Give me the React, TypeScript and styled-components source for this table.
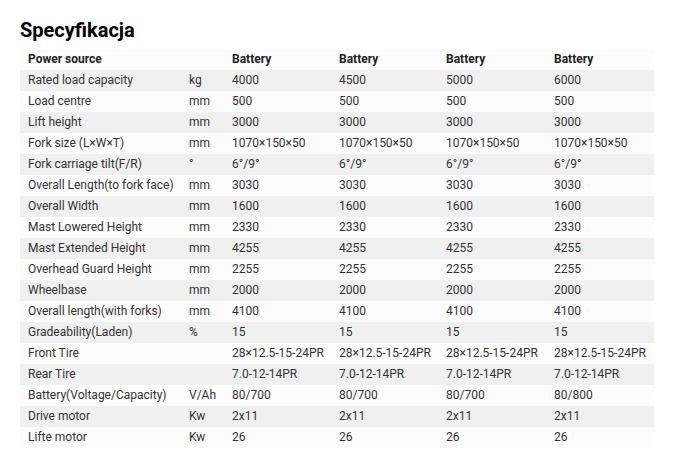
import React from "react";
import styled, { createGlobalStyle } from "styled-components";

const Global = createGlobalStyle`
  html, body { margin: 0; padding: 0; background: #ffffff; }
  body { font-family: Roboto, "Liberation Sans", sans-serif; }
`;

const Page = styled.div`
  padding: 18px 20px 0 20px;
  width: 634px;
`;

const Title = styled.h2`
  margin: 0 0 7px 0;
  font-size: 20px;
  line-height: 24px;
  font-weight: 700;
  color: #000;
`;

const Table = styled.table`
  border-collapse: collapse;
  width: 634px;
  table-layout: fixed;
  font-size: 12px;
  color: #333;
`;

const Row = styled.tr<{ $shade: boolean }>`
  height: 21px;
  background: ${(p) => (p.$shade ? "#f0f0f0" : "#fcfcfc")};
`;

const Cell = styled.td<{ $head?: boolean }>`
  padding: 0 0 0 8px;
  height: 21px;
  line-height: 21px;
  white-space: nowrap;
  overflow: hidden;
  font-weight: ${(p) => (p.$head ? 700 : 400)};
  color: ${(p) => (p.$head ? "#222" : "#333")};
`;

const widths = [161, 43, 107, 107, 108, 108];

type R = [string, string, string, string, string, string];

const rows: R[] = [
  ["Rated load capacity", "kg", "4000", "4500", "5000", "6000"],
  ["Load centre", "mm", "500", "500", "500", "500"],
  ["Lift height", "mm", "3000", "3000", "3000", "3000"],
  ["Fork size (L×W×T)", "mm", "1070×150×50", "1070×150×50", "1070×150×50", "1070×150×50"],
  ["Fork carriage tilt(F/R)", "°", "6°/9°", "6°/9°", "6°/9°", "6°/9°"],
  ["Overall Length(to fork face)", "mm", "3030", "3030", "3030", "3030"],
  ["Overall Width", "mm", "1600", "1600", "1600", "1600"],
  ["Mast Lowered Height", "mm", "2330", "2330", "2330", "2330"],
  ["Mast Extended Height", "mm", "4255", "4255", "4255", "4255"],
  ["Overhead Guard Height", "mm", "2255", "2255", "2255", "2255"],
  ["Wheelbase", "mm", "2000", "2000", "2000", "2000"],
  ["Overall length(with forks)", "mm", "4100", "4100", "4100", "4100"],
  ["Gradeability(Laden)", "%", "15", "15", "15", "15"],
  ["Front Tire", "", "28×12.5-15-24PR", "28×12.5-15-24PR", "28×12.5-15-24PR", "28×12.5-15-24PR"],
  ["Rear Tire", "", "7.0-12-14PR", "7.0-12-14PR", "7.0-12-14PR", "7.0-12-14PR"],
  ["Battery(Voltage/Capacity)", "V/Ah", "80/700", "80/700", "80/700", "80/800"],
  ["Drive motor", "Kw", "2x11", "2x11", "2x11", "2x11"],
  ["Lifte motor", "Kw", "26", "26", "26", "26"],
];

export default function App() {
  return (
    <>
      <Global />
      <Page>
        <Title>Specyfikacja</Title>
        <Table>
          <colgroup>
            {widths.map((w, i) => (
              <col key={i} style={{ width: w }} />
            ))}
          </colgroup>
          <tbody>
            <Row $shade={false}>
              <Cell $head>Power source</Cell>
              <Cell $head></Cell>
              <Cell $head>Battery</Cell>
              <Cell $head>Battery</Cell>
              <Cell $head>Battery</Cell>
              <Cell $head>Battery</Cell>
            </Row>
            {rows.map((r, i) => (
              <Row key={i} $shade={i % 2 === 0}>
                {r.map((c, j) => (
                  <Cell key={j}>{c}</Cell>
                ))}
              </Row>
            ))}
          </tbody>
        </Table>
      </Page>
    </>
  );
}
